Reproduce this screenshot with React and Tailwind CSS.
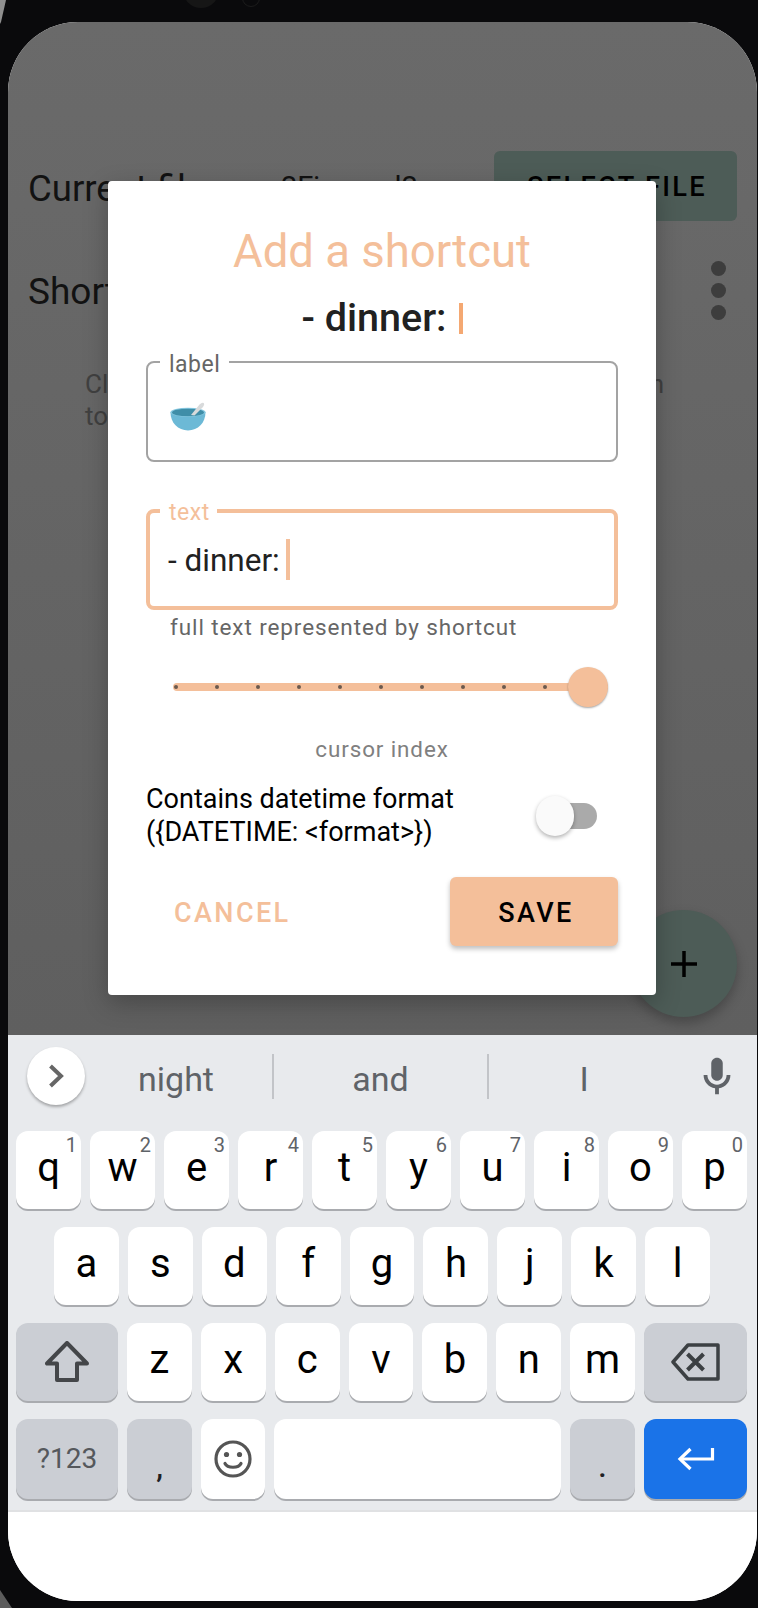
import React from "react";

const rowOne = [
  ["q", "1"], ["w", "2"], ["e", "3"], ["r", "4"], ["t", "5"],
  ["y", "6"], ["u", "7"], ["i", "8"], ["o", "9"], ["p", "0"],
];
const rowTwo = ["a", "s", "d", "f", "g", "h", "j", "k", "l"];
const rowThree = ["z", "x", "c", "v", "b", "n", "m"];
const ticks = [0, 1, 2, 3, 4, 5, 6, 7, 8, 9, 10];

const Key = ({ children, className = "" }) => (
  <div className={`relative flex items-center justify-center rounded-[12px] shadow-[0_2px_0_#a9abaf] ${className}`}>
    {children}
  </div>
);

const Letter = ({ children, className = "" }) => (
  <Key className={`flex-1 bg-white ${className}`}>
    <span className="pb-[4px] text-[40px] leading-[40px] text-black">{children}</span>
  </Key>
);

const Bowl = () => (
  <svg width="36" height="30" viewBox="0 0 36 30">
    <path d="M0.5 10.3 C0.5 21 8 28.5 18 28.5 C28 28.5 35.5 21 35.5 10.3 Z" fill="#6cb9d6" />
    <ellipse cx="18" cy="10.3" rx="17.5" ry="4.6" fill="#86c8e0" />
    <ellipse cx="18" cy="10.5" rx="16" ry="3.8" fill="#3f8ea8" />
    <path d="M21 13 L29.5 2.5 Q32 0 33.8 1 Q35 2.5 33 5 L24.5 13.6 Z" fill="#d8dadb" />
  </svg>
);

const Dialog = () => (
  <div className="absolute left-[100px] top-[159px] flex h-[814px] w-[548px] flex-col rounded-[4px] bg-white px-[38px] shadow-[0_8px_24px_rgba(0,0,0,0.25)]">
    <h2 className="mt-[45px] text-center text-[45.5px] font-normal leading-[52px] text-[#f4bf9a]">Add a shortcut</h2>
    <div className="mt-[20px] flex items-center justify-center gap-[12px] text-[39.5px] font-medium leading-[40px] text-[#212121]">
      <span>- dinner:</span>
      <span className="h-[31px] w-[4px] bg-[#f4a872]"></span>
    </div>

    <div className="relative mt-[23px] h-[101px] rounded-[8px] border-2 border-[#a3a3a3]">
      <span className="absolute left-[12px] top-[-10px] bg-white pl-[9px] pr-[9px] text-[23px] leading-[24px] tracking-[0.5px] text-[#666666]">label</span>
      <div className="ml-[22px] mt-[39px]"><Bowl /></div>
    </div>

    <div className="relative mt-[47px] flex h-[101px] items-center rounded-[8px] border-4 border-[#f4bf9a] pl-[18px]">
      <span className="absolute left-[10px] top-[-12px] bg-white pl-[9px] pr-[7px] text-[23px] leading-[24px] tracking-[0.5px] text-[#f4bf9a]">text</span>
      <span className="pt-[2px] text-[31.5px] leading-[36px] text-[#212121]">- dinner:</span>
      <span className="ml-[6px] h-[41px] w-[4px] bg-[#f4bf9a]"></span>
    </div>
    <p className="mt-[5px] pl-[24px] text-[22.5px] leading-[24px] tracking-[0.9px] text-[#666666]">full text represented by shortcut</p>

    <div className="relative ml-[27px] mt-[28px] flex h-[40px] w-[435px] items-center">
      <div className="h-[8px] w-full rounded-full bg-[#f4bf9a]"></div>
      <div className="absolute left-[1px] right-[20px] top-[18px] flex justify-between">
        {ticks.map((t) => (
          <span key={t} className="h-[4px] w-[4px] rounded-full bg-[#6b5a4e]"></span>
        ))}
      </div>
      <div className="absolute right-0 top-0 h-[40px] w-[40px] rounded-full bg-[#f4bf9a] shadow-[0_1px_2px_rgba(0,0,0,0.35)]"></div>
    </div>
    <p className="mt-[30px] text-center text-[22.4px] leading-[24px] tracking-[0.9px] text-[#808080]">cursor index</p>

    <div className="mt-[22px] flex items-center justify-between">
      <p className="text-[27px] leading-[33px] text-black">
        Contains datetime format
        <br />
        {"({DATETIME: <format>})"}
      </p>
      <div className="relative mr-[21px] h-[40px] w-[61px]">
        <div className="absolute right-0 top-[7px] h-[26px] w-[42px] rounded-full bg-[#aaaaaa]"></div>
        <div className="absolute left-0 top-0 h-[40px] w-[38px] rounded-full bg-[#fafafa] shadow-[0_2px_4px_rgba(0,0,0,0.3)]"></div>
      </div>
    </div>

    <div className="mt-[28px] flex items-center justify-between">
      <button className="pl-[28px] pt-[3px] text-[27px] font-medium tracking-[2.4px] text-[#f4bf9a]">CANCEL</button>
      <button className="h-[69px] w-[168px] rounded-[6px] bg-[#f4bf9a] pl-[4px] pt-[3px] text-[27px] font-medium tracking-[2.4px] text-black shadow-[0_3px_5px_rgba(0,0,0,0.25)]">SAVE</button>
    </div>
  </div>
);

const Keyboard = () => (
  <div className="flex flex-col border-b-2 border-[#e0e1e3] bg-[#e8eaed] pb-[11px]">
    <div className="flex h-[96px] items-start pl-[19px] pt-[12px]">
      <div className="flex h-[58px] w-[58px] shrink-0 items-center justify-center rounded-full bg-white shadow-[0_2px_3px_rgba(0,0,0,0.3)]">
        <svg width="16" height="24" viewBox="0 0 16 24" fill="none" stroke="#666666" strokeWidth="4">
          <path d="M2.5 2 L13 12 L2.5 22" />
        </svg>
      </div>
      <div className="mt-[7px] flex h-[45px] w-[187px] items-center justify-center pr-[5px] pt-[4px] text-[34px] leading-[40px] text-[#5f6368]">night</div>
      <div className="mt-[7px] flex h-[45px] w-[217px] items-center justify-center border-x-2 border-[#c2c4c8] pt-[4px] text-[34px] leading-[40px] text-[#5f6368]">and</div>
      <div className="mt-[7px] flex h-[45px] w-[190px] items-center justify-center pt-[4px] text-[34px] leading-[40px] text-[#5f6368]">I</div>
      <svg width="46" height="46" viewBox="0 0 24 24" fill="#5f6368" className="ml-[15px] mt-[7px]">
        <path d="M12 14c1.66 0 3-1.34 3-3V5c0-1.66-1.34-3-3-3S9 3.34 9 5v6c0 1.66 1.34 3 3 3z" />
        <path d="M17 11c0 2.76-2.24 5-5 5s-5-2.24-5-5H5c0 3.53 2.61 6.43 6 6.92V21h2v-3.08c3.39-.49 6-3.39 6-6.92h-2z" />
      </svg>
    </div>

    <div className="flex flex-col gap-[18px] pl-[8px] pr-[10px]">
      <div className="flex h-[78px] gap-[9px]">
        {rowOne.map(([l, n]) => (
          <Letter key={l}>
            {l}
            <span className="absolute right-[4px] top-[1px] text-[20px] leading-[26px] text-[#5f6368]">{n}</span>
          </Letter>
        ))}
      </div>

      <div className="flex h-[78px] gap-[9px] pl-[38px] pr-[37px]">
        {rowTwo.map((l) => <Letter key={l}>{l}</Letter>)}
      </div>

      <div className="flex h-[78px] gap-[9px]">
        <Key className="w-[102px] shrink-0 bg-[#cbced4]">
          <svg width="44" height="42" viewBox="0 0 44 42" fill="none" stroke="#444649" strokeWidth="4" strokeLinejoin="round">
            <path d="M22 2 L2 22.5 H12 V39 H32 V22.5 H42 Z" />
          </svg>
        </Key>
        {rowThree.map((l) => <Letter key={l}>{l}</Letter>)}
        <Key className="w-[103px] shrink-0 bg-[#cbced4]">
          <svg width="50" height="38" viewBox="0 0 50 38" fill="none" stroke="#3c4043" strokeWidth="3.5" strokeLinejoin="round">
            <path d="M2 19 L17 2 H47 V36 H17 Z" />
            <path d="M16.5 11 L32.5 27 M32.5 11 L16.5 27" strokeWidth="4" />
          </svg>
        </Key>
      </div>

      <div className="flex h-[80px] gap-[9px]">
        <Key className="w-[102px] shrink-0 bg-[#cbced4]">
          <span className="text-[28px] leading-[32px] text-[#55585c]">?123</span>
        </Key>
        <Key className="w-[65px] shrink-0 items-end bg-[#cbced4]">
          <span className="pb-[17px] text-[30px] font-medium leading-[30px] text-[#202124]">,</span>
        </Key>
        <Key className="w-[64px] shrink-0 bg-white">
          <svg width="38" height="38" viewBox="0 0 38 38" fill="none" stroke="#555555" strokeWidth="3.2">
            <circle cx="19" cy="19" r="17" />
            <circle cx="12.5" cy="14.5" r="2.6" fill="#555555" stroke="none" />
            <circle cx="25.5" cy="14.5" r="2.6" fill="#555555" stroke="none" />
            <path d="M11 23.5 C13.5 28.5 24.5 28.5 27 23.5" strokeLinecap="round" />
          </svg>
        </Key>
        <Key className="flex-1 bg-white"></Key>
        <Key className="w-[65px] shrink-0 items-end bg-[#cbced4]">
          <span className="pb-[17px] text-[30px] font-medium leading-[30px] text-[#202124]">.</span>
        </Key>
        <Key className="w-[103px] shrink-0 bg-[#1a73e8]">
          <svg width="38" height="24" viewBox="0 0 38 24" fill="none" stroke="#ffffff" strokeWidth="3.2">
            <path d="M35.5 1 V12 H3" />
            <path d="M13.5 2 L3 12 L13.5 22" />
          </svg>
        </Key>
      </div>
    </div>
  </div>
);

export default function App() {
  return (
    <div className="relative h-[1608px] w-[758px] overflow-hidden bg-[#0a0a0c] pl-[8px] pt-[22px]" style={{ fontFamily: "Roboto, sans-serif" }}>
      <div className="absolute left-[183px] top-[-28px] h-[36px] w-[36px] rounded-full bg-[#161616]"></div>
      <div className="absolute left-[242px] top-[-11px] h-[18px] w-[18px] rounded-full border border-[#1c1c1c]"></div>
      {/* bits of the phone edge in the corners */}
      <svg width="10" height="24" viewBox="0 0 10 24" className="absolute left-0 top-0">
        <path d="M0 0 H6 L1 22 L0 24 Z" fill="#8f8f8f" />
      </svg>
      <svg width="14" height="18" viewBox="0 0 14 18" className="absolute bottom-0 left-0">
        <path d="M0 0 L12 18 H0 Z" fill="#5c5c5c" />
      </svg>

      <div className="relative flex h-[1579px] w-[749px] flex-col overflow-hidden rounded-[70px] bg-white">
        <div className="relative h-[1013px] bg-gradient-to-b from-[#6a6a6a] to-[#5f5f5f] pt-[129px]">
          <div className="flex h-[70px] items-center pl-[20px] pr-[20px]">
            <span className="w-[253px] pt-[5px] text-[36.5px] leading-[44px] text-[#121212]">Current file:</span>
            <span className="w-[213px] pt-[1px] text-[29px] leading-[44px] text-[#121212]">2Fjournal2</span>
            <button className="ml-auto h-[70px] w-[243px] rounded-[6px] bg-[#4d5c57] pl-[3px] pt-[3px] text-[27.2px] font-medium tracking-[2.3px] text-black">SELECT FILE</button>
          </div>

          <div className="mt-[34px] flex h-[70px] items-center justify-between pl-[20px] pr-[31px]">
            <span className="pt-[4px] text-[37px] leading-[44px] text-[#121212]">Shortcuts</span>
            <div className="flex flex-col gap-[7px]">
              <span className="h-[15px] w-[15px] rounded-full bg-[#3d3d3d]"></span>
              <span className="h-[15px] w-[15px] rounded-full bg-[#3d3d3d]"></span>
              <span className="h-[15px] w-[15px] rounded-full bg-[#3d3d3d]"></span>
            </div>
          </div>

          <div className="ml-[77px] mt-[43px] w-[579px] text-[26px] leading-[32px] text-[#404040]">
            <div className="flex justify-between">
              <span>Click</span>
              <span>button</span>
            </div>
            <div>to</div>
          </div>

          <div className="absolute left-[622px] top-[888px] flex h-[107px] w-[107px] items-center justify-center rounded-full bg-[#4d5c57] shadow-[0_6px_12px_rgba(0,0,0,0.25)]">
            <svg width="28" height="28" viewBox="0 0 28 28" stroke="#000000" strokeWidth="3.5">
              <path d="M14 1 V27 M1 14 H27" />
            </svg>
          </div>
        </div>

        <Keyboard />
        <div className="flex-1 bg-white"></div>

        <Dialog />
      </div>
    </div>
  );
}
